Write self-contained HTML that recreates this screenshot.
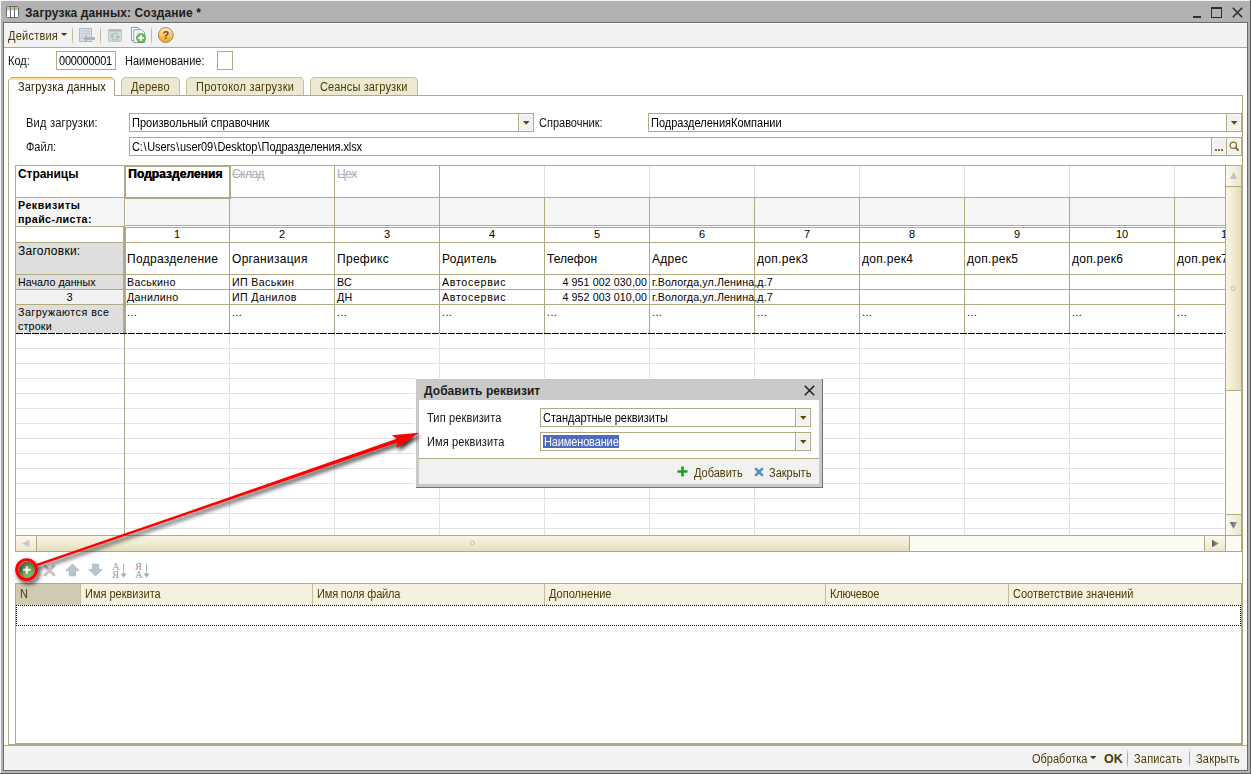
<!DOCTYPE html>
<html><head><meta charset="utf-8"><title>Загрузка данных</title>
<style>
html,body{margin:0;padding:0}
body{width:1251px;height:774px;position:relative;overflow:hidden;background:#b2b2b2;font-family:"Liberation Sans",sans-serif;font-size:11px}
div,span,svg{position:absolute;box-sizing:content-box}
.t{white-space:nowrap}
.b{font-weight:bold}
</style></head><body>
<div style="left:0px;top:0px;width:1251px;height:774px;background:#b2b2b2"></div>
<div style="left:0px;top:0px;width:1251px;height:1px;background:#f3f3f3"></div>
<div style="left:0px;top:0px;width:1px;height:774px;background:#f3f3f3"></div>
<div style="left:1250px;top:0px;width:1px;height:774px;background:#5c5c5c"></div>
<div style="left:0px;top:773px;width:1251px;height:1px;background:#5c5c5c"></div>
<div style="left:3px;top:22px;width:1243px;height:747px;border:1px solid #6c6c6c;background:#fff"></div>
<svg style="left:6px;top:6px" width="13" height="12" viewBox="0 0 13 12">
    <rect x="0.5" y="0.5" width="12" height="11" rx="1" fill="#fff" stroke="#5d6b7a"/>
    <rect x="1" y="1" width="11" height="2.6" fill="#f4c81a"/>
    <line x1="4.5" y1="0.5" x2="4.5" y2="11.5" stroke="#5d6b7a"/><line x1="8.5" y1="0.5" x2="8.5" y2="11.5" stroke="#5d6b7a"/>
    <line x1="0.5" y1="3.8" x2="12.5" y2="3.8" stroke="#8fa0b0" stroke-width="0.6"/>
    </svg>
<span class="t b" style="left:25px;top:6px;font-size:12px;line-height:14px;color:#1c1c1c;letter-spacing:0.1px">Загрузка данных: Создание *</span>
<div style="left:1193px;top:16px;width:8px;height:2px;background:#2e2e2e"></div>
<div style="left:1211px;top:7px;width:9px;height:8px;border:1px solid #2e2e2e;border-top-width:2px"></div>
<svg style="left:1232px;top:7px" width="11" height="11" viewBox="0 0 11 11"><path d="M0.8 0.8L10.2 10.2M10.2 0.8L0.8 10.2" stroke="#2e2e2e" stroke-width="1.6" fill="none"/></svg>
<div style="left:4px;top:23px;width:1243px;height:24px;background:#f2f2f2"></div>
<div style="left:4px;top:23px;width:1243px;height:1px;background:#fbfbfb"></div>
<div style="left:4px;top:47px;width:1243px;height:1px;background:#b1a97f"></div>
<span class="t " style="left:8px;top:29px;font-size:12px;line-height:14px;transform:scaleX(0.9167);transform-origin:0 0;color:#4b3b05;letter-spacing:0.25px">Действия</span>
<svg style="left:61px;top:33px" width="7" height="4"><path d="M0 0H6.2L3.1 3.1Z" fill="#4d3800"/></svg>
<div style="left:72px;top:26px;width:1px;height:19px;background:linear-gradient(#f2f2f2,#c3ba95 25%,#c3ba95 75%,#f2f2f2)"></div>
<div style="left:100px;top:26px;width:1px;height:19px;background:linear-gradient(#f2f2f2,#c3ba95 25%,#c3ba95 75%,#f2f2f2)"></div>
<div style="left:151px;top:26px;width:1px;height:19px;background:linear-gradient(#f2f2f2,#c3ba95 25%,#c3ba95 75%,#f2f2f2)"></div>
<svg style="left:79px;top:28px" width="17" height="16" viewBox="0 0 17 16">
    <rect x="0.5" y="0.5" width="12" height="13" fill="#d9dde1" stroke="#b3bcc4"/>
    <path d="M2 3h2M5 3h6M2 5.5h2M5 5.5h6M2 8h2M2 10.5h2" stroke="#b9c6d2" stroke-width="1"/>
    <path d="M4 10.5L8 6.5V9H16V12H8V14.5Z" fill="#aab6c0"/></svg>
<svg style="left:108px;top:29px" width="14" height="13" viewBox="0 0 14 13">
<rect x="0.5" y="0.5" width="13" height="12" rx="1" fill="#d3d9de" stroke="#bfc7cd"/>
<rect x="0.5" y="0.5" width="13" height="2" fill="#b0bac2"/>
<path d="M4 8.6A3.2 3.2 0 0 1 9.6 5.6" fill="none" stroke="#a8c49c" stroke-width="1.1"/>
<path d="M10 6.6A3.2 3.2 0 0 1 4.4 9.6" fill="none" stroke="#a8c49c" stroke-width="1.1"/>
<path d="M2.2 8.2L4.2 5.6L6 8.4Z" fill="#9fbf92"/><path d="M8 7L9.8 9.8L11.8 7.2Z" fill="#9fbf92"/></svg>
<svg style="left:131px;top:27px" width="16" height="17" viewBox="0 0 16 17">
    <path d="M0.5 0.5H7L9.5 3V13.5H0.5Z" fill="#fff" stroke="#7f9dbb"/>
    <path d="M2.8 2.7H10.5L13.5 5.7V15.5H2.8Z" fill="#fbfcfe" stroke="#7f9dbb"/>
    <path d="M4.5 5H9M4.5 7H6" stroke="#c5ced8" stroke-width="0.8"/>
    <circle cx="10" cy="11" r="4.6" fill="#6cba52" stroke="#4f9a3a" stroke-width="0.6"/>
    <path d="M10 8.2V13.8M7.2 11H12.8" stroke="#fff" stroke-width="2"/></svg>
<svg style="left:157px;top:26px" width="18" height="18" viewBox="0 0 18 18">
    <defs><linearGradient id="hg" x1="0" y1="0" x2="0" y2="1"><stop offset="0" stop-color="#fff0cf"/><stop offset="0.5" stop-color="#fcc766"/><stop offset="1" stop-color="#f6a62a"/></linearGradient></defs>
    <circle cx="8.8" cy="9" r="7.4" fill="url(#hg)" stroke="#9a7a52" stroke-width="0.9"/>
    <text x="8.8" y="13" font-family="Liberation Sans" font-weight="bold" font-size="11" text-anchor="middle" fill="#7a4618">?</text></svg>
<span class="t " style="left:8px;top:54px;font-size:12px;line-height:14px;transform:scaleX(0.9167);transform-origin:0 0;color:#111">Код:</span>
<div style="left:56px;top:51px;width:58px;height:17px;border:1px solid #b1a97f;background:#fff"></div>
<span class="t " style="left:59px;top:54px;font-size:12px;line-height:14px;transform:scaleX(0.9167);transform-origin:0 0;color:#000;letter-spacing:-0.25px">000000001</span>
<span class="t " style="left:125px;top:54px;font-size:12px;line-height:14px;transform:scaleX(0.9167);transform-origin:0 0;color:#111;letter-spacing:0.02px">Наименование:</span>
<div style="left:217px;top:51px;width:14px;height:17px;border:1px solid #b1a97f;background:#fff"></div>
<div style="left:8px;top:95px;width:1233px;height:648px;border:1px solid #b1a97f;background:#fff"></div>
<div style="left:121px;top:77px;width:57px;height:17px;border:1px solid #c6bf9c;border-bottom:none;border-radius:5px 5px 0 0;background:#ede8d2"></div>
<span class="t " style="left:131px;top:80px;font-size:12px;line-height:14px;transform:scaleX(0.9167);transform-origin:0 0;color:#4b3b05;letter-spacing:0.2px">Дерево</span>
<div style="left:186px;top:77px;width:116px;height:17px;border:1px solid #c6bf9c;border-bottom:none;border-radius:5px 5px 0 0;background:#ede8d2"></div>
<span class="t " style="left:196px;top:80px;font-size:12px;line-height:14px;transform:scaleX(0.9167);transform-origin:0 0;color:#4b3b05;letter-spacing:0.27px">Протокол загрузки</span>
<div style="left:310px;top:77px;width:106px;height:17px;border:1px solid #c6bf9c;border-bottom:none;border-radius:5px 5px 0 0;background:#ede8d2"></div>
<span class="t " style="left:320px;top:80px;font-size:12px;line-height:14px;transform:scaleX(0.9167);transform-origin:0 0;color:#4b3b05;letter-spacing:0.15px">Сеансы загрузки</span>
<div style="left:8px;top:77px;width:105px;height:18px;border:1px solid #b1a97f;border-bottom:none;border-radius:5px 5px 0 0;background:#fff;overflow:hidden"><div style="left:0;top:0;width:106px;height:2px;background:linear-gradient(#ffd77a,#ffe9b0)"></div></div>
<span class="t " style="left:18px;top:80px;font-size:12px;line-height:14px;transform:scaleX(0.9167);transform-origin:0 0;color:#2a2208;letter-spacing:0.17px">Загрузка данных</span>
<span class="t " style="left:26px;top:116px;font-size:12px;line-height:14px;transform:scaleX(0.9167);transform-origin:0 0;color:#111;letter-spacing:0.27px">Вид загрузки:</span>
<div style="left:129px;top:113px;width:403px;height:17px;border:1px solid #b1a97f;background:#fff"></div>
<div style="left:518px;top:114px;width:14px;height:17px;border-left:1px solid #b1a97f;background:#f1f1f1;box-shadow:inset 0 0 0 1px #f7f7f7"></div>
<svg style="left:523px;top:121px;margin-left:-0.3px" width="7" height="4"><path d="M0 0H6.5L3.25 3.8Z" fill="#644800"/></svg>
<span class="t " style="left:132px;top:116px;font-size:12px;line-height:14px;transform:scaleX(0.9167);transform-origin:0 0;color:#000;letter-spacing:0.05px">Произвольный справочник</span>
<span class="t " style="left:539px;top:116px;font-size:12px;line-height:14px;transform:scaleX(0.9167);transform-origin:0 0;color:#111">Справочник:</span>
<div style="left:648px;top:113px;width:592px;height:17px;border:1px solid #b1a97f;background:#fff"></div>
<div style="left:1226px;top:114px;width:14px;height:17px;border-left:1px solid #b1a97f;background:#f1f1f1;box-shadow:inset 0 0 0 1px #f7f7f7"></div>
<svg style="left:1231px;top:121px;margin-left:-0.3px" width="7" height="4"><path d="M0 0H6.5L3.25 3.8Z" fill="#644800"/></svg>
<span class="t " style="left:651px;top:116px;font-size:12px;line-height:14px;transform:scaleX(0.9167);transform-origin:0 0;color:#000">ПодразделенияКомпании</span>
<span class="t " style="left:26px;top:140px;font-size:12px;line-height:14px;transform:scaleX(0.9167);transform-origin:0 0;color:#111">Файл:</span>
<div style="left:129px;top:137px;width:1111px;height:17px;border:1px solid #b1a97f;background:#fff"></div>
<div style="left:1211px;top:138px;width:14px;height:17px;border-left:1px solid #b1a97f;background:#f1f1f1;box-shadow:inset 0 0 0 1px #f7f7f7"></div>
<div style="left:1226px;top:138px;width:14px;height:17px;border-left:1px solid #b1a97f;background:#f1f1f1;box-shadow:inset 0 0 0 1px #f7f7f7"></div>
<div style="left:1215px;top:149px;width:2px;height:2px;background:#8d7433"></div>
<div style="left:1218px;top:149px;width:2px;height:2px;background:#8d7433"></div>
<div style="left:1221px;top:149px;width:2px;height:2px;background:#8d7433"></div>
<svg style="left:1228px;top:140px" width="12" height="12" viewBox="0 0 12 12"><circle cx="5.3" cy="5.2" r="3.2" fill="#f8f6ee" stroke="#8a6d2a" stroke-width="1.25"/><path d="M7.6 7.6L10 10" stroke="#8a6418" stroke-width="1.9" stroke-linecap="round"/></svg>
<span class="t " style="left:132px;top:140px;font-size:12px;line-height:14px;transform:scaleX(0.9167);transform-origin:0 0;color:#000;letter-spacing:-0.1px">C:<span style="position:static;margin:0 0.8px">\</span>Users<span style="position:static;margin:0 0.8px">\</span>user09<span style="position:static;margin:0 0.8px">\</span>Desktop<span style="position:static;margin:0 0.8px">\</span>Подразделения.xlsx</span>
<div style="left:15px;top:165px;width:1225px;height:385px;border:1px solid #b1a97f;background:#fff"></div>
<div style="left:16px;top:348px;width:1209px;height:1px;background:#e2e2e2"></div>
<div style="left:16px;top:363px;width:1209px;height:1px;background:#e2e2e2"></div>
<div style="left:16px;top:378px;width:1209px;height:1px;background:#e2e2e2"></div>
<div style="left:16px;top:393px;width:1209px;height:1px;background:#e2e2e2"></div>
<div style="left:16px;top:408px;width:1209px;height:1px;background:#e2e2e2"></div>
<div style="left:16px;top:423px;width:1209px;height:1px;background:#e2e2e2"></div>
<div style="left:16px;top:438px;width:1209px;height:1px;background:#e2e2e2"></div>
<div style="left:16px;top:453px;width:1209px;height:1px;background:#e2e2e2"></div>
<div style="left:16px;top:468px;width:1209px;height:1px;background:#e2e2e2"></div>
<div style="left:16px;top:483px;width:1209px;height:1px;background:#e2e2e2"></div>
<div style="left:16px;top:498px;width:1209px;height:1px;background:#e2e2e2"></div>
<div style="left:16px;top:513px;width:1209px;height:1px;background:#e2e2e2"></div>
<div style="left:16px;top:528px;width:1209px;height:1px;background:#e2e2e2"></div>
<div style="left:229px;top:334px;width:1px;height:201px;background:#e2e2e2"></div>
<div style="left:334px;top:334px;width:1px;height:201px;background:#e2e2e2"></div>
<div style="left:439px;top:334px;width:1px;height:201px;background:#e2e2e2"></div>
<div style="left:544px;top:334px;width:1px;height:201px;background:#e2e2e2"></div>
<div style="left:649px;top:334px;width:1px;height:201px;background:#e2e2e2"></div>
<div style="left:754px;top:334px;width:1px;height:201px;background:#e2e2e2"></div>
<div style="left:859px;top:334px;width:1px;height:201px;background:#e2e2e2"></div>
<div style="left:964px;top:334px;width:1px;height:201px;background:#e2e2e2"></div>
<div style="left:1069px;top:334px;width:1px;height:201px;background:#e2e2e2"></div>
<div style="left:1174px;top:334px;width:1px;height:201px;background:#e2e2e2"></div>
<div style="left:544px;top:166px;width:1px;height:31px;background:#e2e2e2"></div>
<div style="left:649px;top:166px;width:1px;height:31px;background:#e2e2e2"></div>
<div style="left:754px;top:166px;width:1px;height:31px;background:#e2e2e2"></div>
<div style="left:859px;top:166px;width:1px;height:31px;background:#e2e2e2"></div>
<div style="left:964px;top:166px;width:1px;height:31px;background:#e2e2e2"></div>
<div style="left:1069px;top:166px;width:1px;height:31px;background:#e2e2e2"></div>
<div style="left:1174px;top:166px;width:1px;height:31px;background:#e2e2e2"></div>
<div style="left:16px;top:198px;width:1209px;height:28px;background:#f5f5f5"></div>
<div style="left:125px;top:226px;width:1100px;height:1px;background:#fff"></div>
<div style="left:16px;top:243px;width:107px;height:31px;background:#dedede"></div>
<div style="left:16px;top:275px;width:107px;height:14px;background:#dedede"></div>
<div style="left:16px;top:290px;width:107px;height:14px;background:#f1f1f1"></div>
<div style="left:16px;top:305px;width:107px;height:28px;background:#dedede"></div>
<div style="left:16px;top:197px;width:1209px;height:1px;background:#b1a97f"></div>
<div style="left:16px;top:226px;width:109px;height:1px;background:#b1a97f"></div>
<div style="left:125px;top:225px;width:1100px;height:1px;background:#b1a97f"></div>
<div style="left:125px;top:227px;width:1100px;height:1px;background:#b1a97f"></div>
<div style="left:16px;top:242px;width:1209px;height:1px;background:#b1a97f"></div>
<div style="left:16px;top:274px;width:1209px;height:1px;background:#b1a97f"></div>
<div style="left:16px;top:289px;width:1209px;height:1px;background:#b1a97f"></div>
<div style="left:16px;top:304px;width:1209px;height:1px;background:#b1a97f"></div>
<div style="left:229px;top:197px;width:1px;height:136px;background:#b1a97f"></div>
<div style="left:334px;top:197px;width:1px;height:136px;background:#b1a97f"></div>
<div style="left:439px;top:197px;width:1px;height:136px;background:#b1a97f"></div>
<div style="left:544px;top:197px;width:1px;height:136px;background:#b1a97f"></div>
<div style="left:649px;top:197px;width:1px;height:136px;background:#b1a97f"></div>
<div style="left:754px;top:197px;width:1px;height:136px;background:#b1a97f"></div>
<div style="left:859px;top:197px;width:1px;height:136px;background:#b1a97f"></div>
<div style="left:964px;top:197px;width:1px;height:136px;background:#b1a97f"></div>
<div style="left:1069px;top:197px;width:1px;height:136px;background:#b1a97f"></div>
<div style="left:1174px;top:197px;width:1px;height:136px;background:#b1a97f"></div>
<div style="left:229px;top:166px;width:1px;height:32px;background:#b1a97f"></div>
<div style="left:334px;top:166px;width:1px;height:32px;background:#b1a97f"></div>
<div style="left:439px;top:166px;width:1px;height:32px;background:#b1a97f"></div>
<div style="left:124px;top:166px;width:1px;height:61px;background:#b1a97f"></div>
<div style="left:123px;top:227px;width:3px;height:107px;background:#b1a97f"></div>
<div style="left:124px;top:334px;width:1px;height:201px;background:#b1a97f"></div>
<div style="left:125px;top:199px;width:1px;height:26px;background:#fff"></div>
<div style="left:124px;top:165px;width:103px;height:30px;border:2px solid #b1a97f;background:#fff"></div>
<div style="left:16px;top:333px;width:1209px;height:1px;background:repeating-linear-gradient(90deg,#000 0,#000 6.6px,transparent 6.6px,transparent 8px)"></div>
<span class="t b" style="left:18px;top:167px;font-size:12px;line-height:14px;color:#000;letter-spacing:-0.05px">Страницы</span>
<span class="t b" style="left:18px;top:199px;font-size:10.67px;line-height:12.67px;color:#000;letter-spacing:0.55px">Реквизиты</span>
<span class="t b" style="left:18px;top:213px;font-size:10.67px;line-height:12.67px;color:#000;letter-spacing:0.42px">прайс-листа:</span>
<span class="t b" style="left:128px;top:167px;font-size:12px;line-height:14px;color:#000;letter-spacing:0.05px;text-shadow:0.5px 0 0 #000">Подразделения</span>
<span class="t " style="left:232px;top:167px;font-size:12px;line-height:14px;color:#a3aab8;text-decoration:line-through;text-decoration-thickness:0.8px;text-decoration-color:#b4bac6;letter-spacing:-0.55px">Склад</span>
<span class="t " style="left:337px;top:167px;font-size:12px;line-height:14px;color:#a3aab8;text-decoration:line-through;text-decoration-thickness:0.8px;text-decoration-color:#b4bac6;letter-spacing:-0.55px">Цех</span>
<span class="t" style="left:157px;top:228px;width:40px;text-align:center;font-size:11px;line-height:13px;color:#000">1</span>
<span class="t" style="left:262px;top:228px;width:40px;text-align:center;font-size:11px;line-height:13px;color:#000">2</span>
<span class="t" style="left:367px;top:228px;width:40px;text-align:center;font-size:11px;line-height:13px;color:#000">3</span>
<span class="t" style="left:472px;top:228px;width:40px;text-align:center;font-size:11px;line-height:13px;color:#000">4</span>
<span class="t" style="left:577px;top:228px;width:40px;text-align:center;font-size:11px;line-height:13px;color:#000">5</span>
<span class="t" style="left:682px;top:228px;width:40px;text-align:center;font-size:11px;line-height:13px;color:#000">6</span>
<span class="t" style="left:787px;top:228px;width:40px;text-align:center;font-size:11px;line-height:13px;color:#000">7</span>
<span class="t" style="left:892px;top:228px;width:40px;text-align:center;font-size:11px;line-height:13px;color:#000">8</span>
<span class="t" style="left:997px;top:228px;width:40px;text-align:center;font-size:11px;line-height:13px;color:#000">9</span>
<span class="t" style="left:1102px;top:228px;width:40px;text-align:center;font-size:11px;line-height:13px;color:#000">10</span>
<div style="left:1175px;top:228px;width:50px;height:14px;overflow:hidden"><span class="t" style="left:46px;top:0;font-size:11px;line-height:13px;color:#000">11</span></div>
<span class="t " style="left:18px;top:244px;font-size:12px;line-height:14px;color:#000;letter-spacing:0.25px">Заголовки:</span>
<span class="t " style="left:127px;top:252px;font-size:12px;line-height:14px;color:#000;letter-spacing:0.3px">Подразделение</span>
<span class="t " style="left:232px;top:252px;font-size:12px;line-height:14px;color:#000;letter-spacing:0.3px">Организация</span>
<span class="t " style="left:337px;top:252px;font-size:12px;line-height:14px;color:#000;letter-spacing:0.3px">Префикс</span>
<span class="t " style="left:442px;top:252px;font-size:12px;line-height:14px;color:#000;letter-spacing:0.3px">Родитель</span>
<span class="t " style="left:547px;top:252px;font-size:12px;line-height:14px;color:#000;letter-spacing:0.05px">Телефон</span>
<span class="t " style="left:652px;top:252px;font-size:12px;line-height:14px;color:#000;letter-spacing:0.3px">Адрес</span>
<span class="t " style="left:757px;top:252px;font-size:12px;line-height:14px;color:#000;letter-spacing:0.3px">доп.рек3</span>
<span class="t " style="left:862px;top:252px;font-size:12px;line-height:14px;color:#000;letter-spacing:0.3px">доп.рек4</span>
<span class="t " style="left:967px;top:252px;font-size:12px;line-height:14px;color:#000;letter-spacing:0.3px">доп.рек5</span>
<span class="t " style="left:1072px;top:252px;font-size:12px;line-height:14px;color:#000;letter-spacing:0.3px">доп.рек6</span>
<div style="left:1175px;top:250px;width:50px;height:16px;overflow:hidden"><span class="t" style="left:2px;top:2px;font-size:12px;line-height:14px;color:#000;letter-spacing:0.3px">доп.рек7</span></div>
<span class="t " style="left:18px;top:276px;font-size:10.67px;line-height:12.67px;color:#000;letter-spacing:0.05px">Начало данных</span>
<span class="t" style="left:16px;top:291px;width:107px;text-align:center;font-size:11px;line-height:13px;color:#000">3</span>
<span class="t " style="left:18px;top:306px;font-size:10.67px;line-height:12.67px;color:#000;letter-spacing:0.5px">Загружаются все</span>
<span class="t " style="left:18px;top:320px;font-size:10.67px;line-height:12.67px;color:#000;letter-spacing:0.2px">строки</span>
<span class="t " style="left:127px;top:276px;font-size:10.67px;line-height:12.67px;color:#000;letter-spacing:0.3px">Васькино</span>
<span class="t " style="left:232px;top:276px;font-size:10.67px;line-height:12.67px;color:#000;letter-spacing:0.35px">ИП Васькин</span>
<span class="t " style="left:337px;top:276px;font-size:10.67px;line-height:12.67px;color:#000;letter-spacing:0.3px">ВС</span>
<span class="t " style="left:442px;top:276px;font-size:10.67px;line-height:12.67px;color:#000;letter-spacing:0.68px">Автосервис</span>
<span class="t" style="left:545px;top:276px;width:102px;text-align:right;font-size:10.67px;line-height:12.67px;color:#000;letter-spacing:0.1px">4 951 002 030,00</span>
<span class="t " style="left:652px;top:276px;font-size:10.67px;line-height:12.67px;color:#000;letter-spacing:0.12px">г.Вологда,ул.Ленина,д.7</span>
<span class="t " style="left:127px;top:291px;font-size:10.67px;line-height:12.67px;color:#000;letter-spacing:0.3px">Данилино</span>
<span class="t " style="left:232px;top:291px;font-size:10.67px;line-height:12.67px;color:#000;letter-spacing:0.35px">ИП Данилов</span>
<span class="t " style="left:337px;top:291px;font-size:10.67px;line-height:12.67px;color:#000;letter-spacing:0.3px">ДН</span>
<span class="t " style="left:442px;top:291px;font-size:10.67px;line-height:12.67px;color:#000;letter-spacing:0.68px">Автосервис</span>
<span class="t" style="left:545px;top:291px;width:102px;text-align:right;font-size:10.67px;line-height:12.67px;color:#000;letter-spacing:0.1px">4 952 003 010,00</span>
<span class="t " style="left:652px;top:291px;font-size:10.67px;line-height:12.67px;color:#000;letter-spacing:0.12px">г.Вологда,ул.Ленина,д.7</span>
<span class="t " style="left:127px;top:306px;font-size:10.67px;line-height:12.67px;color:#000;letter-spacing:0.45px">...</span>
<span class="t " style="left:232px;top:306px;font-size:10.67px;line-height:12.67px;color:#000;letter-spacing:0.45px">...</span>
<span class="t " style="left:337px;top:306px;font-size:10.67px;line-height:12.67px;color:#000;letter-spacing:0.45px">...</span>
<span class="t " style="left:442px;top:306px;font-size:10.67px;line-height:12.67px;color:#000;letter-spacing:0.45px">...</span>
<span class="t " style="left:547px;top:306px;font-size:10.67px;line-height:12.67px;color:#000;letter-spacing:0.45px">...</span>
<span class="t " style="left:652px;top:306px;font-size:10.67px;line-height:12.67px;color:#000;letter-spacing:0.45px">...</span>
<span class="t " style="left:757px;top:306px;font-size:10.67px;line-height:12.67px;color:#000;letter-spacing:0.45px">...</span>
<span class="t " style="left:862px;top:306px;font-size:10.67px;line-height:12.67px;color:#000;letter-spacing:0.45px">...</span>
<span class="t " style="left:967px;top:306px;font-size:10.67px;line-height:12.67px;color:#000;letter-spacing:0.45px">...</span>
<span class="t " style="left:1072px;top:306px;font-size:10.67px;line-height:12.67px;color:#000;letter-spacing:0.45px">...</span>
<span class="t " style="left:1177px;top:306px;font-size:10.67px;line-height:12.67px;color:#000;letter-spacing:0.45px">...</span>
<div style="left:1225px;top:166px;width:16px;height:369px;background:#fbfaf3"></div>
<div style="left:1225px;top:166px;width:1px;height:369px;background:#b1a97f"></div>
<div style="left:1226px;top:166px;width:15px;height:20px;background:linear-gradient(90deg,#fbf9f0,#f3f0dc 50%,#ebe6cd)"></div>
<div style="left:1226px;top:186px;width:15px;height:1px;background:#b1a97f"></div>
<svg style="left:1229px;top:171px" width="9" height="9"><path d="M4.5 0.8L8.2 8H0.8Z" fill="#c9c2c0"/></svg>
<div style="left:1226px;top:187px;width:15px;height:203px;background:linear-gradient(90deg,#f8f5e4,#f0ebd2 50%,#e4ddbd)"></div>
<div style="left:1226px;top:390px;width:15px;height:1px;background:#b1a97f"></div>
<svg style="left:1230px;top:285px" width="6" height="7"><circle cx="3" cy="3.5" r="2" fill="none" stroke="#c9c3a6" stroke-width="1"/></svg>
<div style="left:1226px;top:514px;width:15px;height:1px;background:#b1a97f"></div>
<div style="left:1226px;top:515px;width:15px;height:20px;background:linear-gradient(90deg,#fbf9f0,#f3f0dc 50%,#ebe6cd)"></div>
<svg style="left:1229px;top:521px" width="9" height="9"><defs><linearGradient id="ag"><stop offset="0" stop-color="#5e5e5e"/><stop offset="1" stop-color="#a4a4a4"/></linearGradient></defs><path d="M0.8 1H8.2L4.5 8Z" fill="url(#ag)"/></svg>
<div style="left:16px;top:535px;width:1225px;height:1px;background:#b1a97f"></div>
<div style="left:16px;top:536px;width:1225px;height:15px;background:#fbfaf3"></div>
<div style="left:16px;top:536px;width:20px;height:15px;background:linear-gradient(#fbf9f0,#f3f0dc 50%,#ebe6cd)"></div>
<div style="left:36px;top:536px;width:1px;height:15px;background:#b1a97f"></div>
<svg style="left:22px;top:539px" width="8" height="9"><path d="M7.4 0.6V8.4L0.4 4.5Z" fill="#cdc7c5"/></svg>
<div style="left:37px;top:536px;width:872px;height:15px;background:linear-gradient(#f8f5e4,#f0ebd2 50%,#e4ddbd)"></div>
<div style="left:909px;top:536px;width:1px;height:15px;background:#b1a97f"></div>
<svg style="left:469px;top:540px" width="7" height="6"><circle cx="3.5" cy="3" r="2" fill="none" stroke="#c9c3a6" stroke-width="1"/></svg>
<div style="left:1204px;top:536px;width:1px;height:15px;background:#b1a97f"></div>
<div style="left:1205px;top:536px;width:20px;height:15px;background:linear-gradient(#fbf9f0,#f3f0dc 50%,#ebe6cd)"></div>
<svg style="left:1211px;top:539px" width="9" height="9"><defs><linearGradient id="ag2" x1="0" y1="0" x2="1" y2="0"><stop offset="0" stop-color="#5e5e5e"/><stop offset="1" stop-color="#a4a4a4"/></linearGradient></defs><path d="M1 0.8V8.2L8 4.5Z" fill="url(#ag2)"/></svg>
<div style="left:1225px;top:536px;width:1px;height:15px;background:#b1a97f"></div>
<svg style="left:18px;top:561px" width="18" height="18" viewBox="0 0 18 18">
<defs><linearGradient id="gg" x1="0" y1="0" x2="0" y2="1"><stop offset="0" stop-color="#b4d3a0"/><stop offset="0.5" stop-color="#6aa651"/><stop offset="1" stop-color="#8abf6e"/></linearGradient></defs>
<circle cx="8.8" cy="8.7" r="7.6" fill="url(#gg)" stroke="#8d9a8a" stroke-width="0.9"/>
<path d="M8.8 5V12.6M5 8.8H12.6" stroke="#fff" stroke-width="2.1"/></svg>
<svg style="left:43px;top:564px" width="13" height="13" viewBox="0 0 13 13"><path d="M2 2L11 11M11 2L2 11" stroke="#bfb0b0" stroke-width="2.6" stroke-linecap="round"/><path d="M2 2L11 11M11 2L2 11" stroke="#d9cccc" stroke-width="1.2" stroke-linecap="round"/></svg>
<svg style="left:65px;top:563px" width="15" height="14" viewBox="0 0 15 14"><path d="M7.5 1L14 7.5H10.5V12.8H4.5V7.5H1Z" fill="#b9c5cd" stroke="#a5b3bd" stroke-width="0.8"/></svg>
<svg style="left:88px;top:563px" width="15" height="14" viewBox="0 0 15 14"><path d="M7.5 13L14 6.5H10.5V1.2H4.5V6.5H1Z" fill="#b9c5cd" stroke="#a5b3bd" stroke-width="0.8"/></svg>
<span class="t" style="left:112px;top:562px;font-family:'Liberation Serif',serif;font-size:10.5px;line-height:10px;color:#8fa3af">А</span>
<span class="t" style="left:112px;top:570px;font-family:'Liberation Serif',serif;font-size:10.5px;line-height:10px;color:#b08f8f">Я</span>
<svg style="left:120px;top:563px" width="8" height="16" viewBox="0 0 8 16"><path d="M3.6 0.5V13" stroke="#9fb0ba" stroke-width="1"/><path d="M0.6 10.6H6.6L3.6 14.8Z" fill="#9fb0ba"/></svg>
<span class="t" style="left:135px;top:562px;font-family:'Liberation Serif',serif;font-size:10.5px;line-height:10px;color:#b08f8f">Я</span>
<span class="t" style="left:135px;top:570px;font-family:'Liberation Serif',serif;font-size:10.5px;line-height:10px;color:#8fa3af">А</span>
<svg style="left:143px;top:563px" width="8" height="16" viewBox="0 0 8 16"><path d="M3.6 0.5V13" stroke="#9fb0ba" stroke-width="1"/><path d="M0.6 10.6H6.6L3.6 14.8Z" fill="#9fb0ba"/></svg>
<div style="left:15px;top:583px;width:1225px;height:159px;border:1px solid #b1a97f;background:#fff"></div>
<div style="left:16px;top:584px;width:1225px;height:21px;background:#f4f1de"></div>
<div style="left:16px;top:584px;width:64px;height:21px;background:#cfcbb3"></div>
<div style="left:80px;top:584px;width:1px;height:21px;background:#c4bd98"></div>
<div style="left:312px;top:584px;width:1px;height:21px;background:#c4bd98"></div>
<div style="left:544px;top:584px;width:1px;height:21px;background:#c4bd98"></div>
<div style="left:825px;top:584px;width:1px;height:21px;background:#c4bd98"></div>
<div style="left:1008px;top:584px;width:1px;height:21px;background:#c4bd98"></div>
<span class="t " style="left:20px;top:587px;font-size:12px;line-height:14px;transform:scaleX(0.9167);transform-origin:0 0;color:#4b3b05">N</span>
<span class="t " style="left:85px;top:587px;font-size:12px;line-height:14px;transform:scaleX(0.9167);transform-origin:0 0;color:#4b3b05">Имя реквизита</span>
<span class="t " style="left:317px;top:587px;font-size:12px;line-height:14px;transform:scaleX(0.9167);transform-origin:0 0;color:#4b3b05;letter-spacing:-0.18px">Имя поля файла</span>
<span class="t " style="left:549px;top:587px;font-size:12px;line-height:14px;transform:scaleX(0.9167);transform-origin:0 0;color:#4b3b05">Дополнение</span>
<span class="t " style="left:830px;top:587px;font-size:12px;line-height:14px;transform:scaleX(0.9167);transform-origin:0 0;color:#4b3b05;letter-spacing:-0.2px">Ключевое</span>
<span class="t " style="left:1013px;top:587px;font-size:12px;line-height:14px;transform:scaleX(0.9167);transform-origin:0 0;color:#4b3b05">Соответствие значений</span>
<div style="left:16px;top:605px;width:1223px;height:19px;border:1px dotted #000"></div>
<div style="left:4px;top:745px;width:1243px;height:1px;background:#b1a97f"></div>
<div style="left:4px;top:746px;width:1243px;height:24px;background:#f2f2f2"></div>
<span class="t " style="left:1032px;top:752px;font-size:12px;line-height:14px;transform:scaleX(0.9167);transform-origin:0 0;color:#4b3b05">Обработка</span>
<svg style="left:1090px;top:756px" width="7" height="4"><path d="M0 0H6.4L3.2 3.2Z" fill="#4d3800"/></svg>
<span class="t b" style="left:1104px;top:752px;font-size:12.5px;line-height:14.5px;color:#4b3b05;letter-spacing:0.1px">OK</span>
<div style="left:1127px;top:749px;width:1px;height:19px;background:linear-gradient(#f2f2f2,#b8ae86 25%,#b8ae86 75%,#f2f2f2)"></div>
<div style="left:1189px;top:749px;width:1px;height:19px;background:linear-gradient(#f2f2f2,#b8ae86 25%,#b8ae86 75%,#f2f2f2)"></div>
<span class="t " style="left:1134px;top:752px;font-size:12px;line-height:14px;transform:scaleX(0.9167);transform-origin:0 0;color:#4b3b05;letter-spacing:0.2px">Записать</span>
<span class="t " style="left:1196px;top:752px;font-size:12px;line-height:14px;transform:scaleX(0.9167);transform-origin:0 0;color:#4b3b05;letter-spacing:0.25px">Закрыть</span>
<div style="left:415px;top:378px;width:408px;height:110px;background:#fff"></div>
<div style="left:416px;top:379px;width:407px;height:109px;background:#6f6f6f"></div>
<div style="left:416px;top:379px;width:406px;height:108px;background:#c9c9c9"></div>
<div style="left:419px;top:400px;width:400px;height:59px;background:#fff"></div>
<div style="left:419px;top:458px;width:400px;height:1px;background:#b1a97f"></div>
<div style="left:419px;top:459px;width:400px;height:25px;background:#f1f1f1"></div>
<span class="t b" style="left:424px;top:384px;font-size:12px;line-height:14px;color:#1c1c1c;letter-spacing:0.05px">Добавить реквизит</span>
<svg style="left:804px;top:385px" width="11" height="11" viewBox="0 0 11 11"><path d="M0.8 0.8L10.2 10.2M10.2 0.8L0.8 10.2" stroke="#222" stroke-width="1.6" fill="none"/></svg>
<span class="t " style="left:427px;top:411px;font-size:12px;line-height:14px;transform:scaleX(0.9167);transform-origin:0 0;color:#111;letter-spacing:0.15px">Тип реквизита</span>
<span class="t " style="left:427px;top:435px;font-size:12px;line-height:14px;transform:scaleX(0.9167);transform-origin:0 0;color:#111;letter-spacing:0.15px">Имя реквизита</span>
<div style="left:540px;top:408px;width:269px;height:17px;border:1px solid #b1a97f;background:#fff"></div>
<div style="left:795px;top:409px;width:14px;height:17px;border-left:1px solid #b1a97f;background:#f1f1f1;box-shadow:inset 0 0 0 1px #f7f7f7"></div>
<svg style="left:800px;top:416px;margin-left:-0.3px" width="7" height="4"><path d="M0 0H6.5L3.25 3.8Z" fill="#644800"/></svg>
<div style="left:540px;top:432px;width:269px;height:17px;border:1px solid #b1a97f;background:#fff"></div>
<div style="left:795px;top:433px;width:14px;height:17px;border-left:1px solid #b1a97f;background:#f1f1f1;box-shadow:inset 0 0 0 1px #f7f7f7"></div>
<svg style="left:800px;top:440px;margin-left:-0.3px" width="7" height="4"><path d="M0 0H6.5L3.25 3.8Z" fill="#644800"/></svg>
<span class="t " style="left:543px;top:411px;font-size:12px;line-height:14px;transform:scaleX(0.9167);transform-origin:0 0;color:#000">Стандартные реквизиты</span>
<div style="left:543px;top:435px;width:76px;height:13px;background:#4e6bc4"></div>
<span class="t " style="left:544px;top:435px;font-size:12px;line-height:14px;transform:scaleX(0.9167);transform-origin:0 0;color:#fff;letter-spacing:-0.15px">Наименование</span>
<svg style="left:677px;top:466px" width="11" height="11" viewBox="0 0 11 11"><path d="M5.5 0.5V10.5M0.5 5.5H10.5" stroke="#1f9a1f" stroke-width="2.6"/></svg>
<span class="t " style="left:694px;top:466px;font-size:12px;line-height:14px;transform:scaleX(0.9167);transform-origin:0 0;color:#4b3b05">Добавить</span>
<svg style="left:754px;top:467px" width="10" height="10" viewBox="0 0 10 10"><path d="M1.2 1.2L8.8 8.8M8.8 1.2L1.2 8.8" stroke="#4a8fc4" stroke-width="2.4"/></svg>
<span class="t " style="left:769px;top:466px;font-size:12px;line-height:14px;transform:scaleX(0.9167);transform-origin:0 0;color:#4b3b05">Закрыть</span>
<svg style="left:0;top:0;pointer-events:none" width="1251" height="774" viewBox="0 0 1251 774">
<defs><filter id="sh" x="-5%" y="-20%" width="110%" height="140%"><feGaussianBlur in="SourceAlpha" stdDeviation="1.9"/><feOffset dx="2.2" dy="2.9"/><feComponentTransfer><feFuncA type="linear" slope="0.85"/></feComponentTransfer><feMerge><feMergeNode/><feMergeNode in="SourceGraphic"/></feMerge></filter></defs>
<g filter="url(#sh)"><polygon points="36.9,566.3 181.3,516.5 300.4,475.7 387.2,446.1 398.0,442.4 396.4,448.2 418.9,432.7 391.8,435.2 396.8,438.8 386.0,442.6 299.5,472.8 180.5,514.2 36.1,564.1" fill="#ff0000"/>
<circle cx="26.6" cy="569.6" r="9.9" fill="none" stroke="#ff0000" stroke-width="3.1"/></g></svg>
</body></html>
